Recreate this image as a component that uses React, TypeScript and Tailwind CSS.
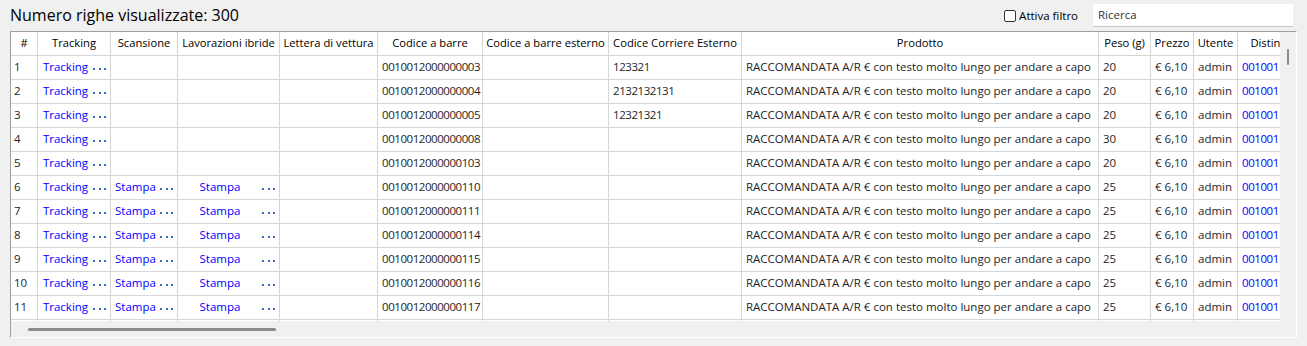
import React from 'react';

type Row = {
  n: number;
  stampa: boolean;
  codice: string;
  corriere: string;
  peso: string;
};

const rows: Row[] = [
  { n: 1, stampa: false, codice: '0010012000000003', corriere: '123321', peso: '20' },
  { n: 2, stampa: false, codice: '0010012000000004', corriere: '2132132131', peso: '20' },
  { n: 3, stampa: false, codice: '0010012000000005', corriere: '12321321', peso: '20' },
  { n: 4, stampa: false, codice: '0010012000000008', corriere: '', peso: '30' },
  { n: 5, stampa: false, codice: '0010012000000103', corriere: '', peso: '20' },
  { n: 6, stampa: true, codice: '0010012000000110', corriere: '', peso: '25' },
  { n: 7, stampa: true, codice: '0010012000000111', corriere: '', peso: '25' },
  { n: 8, stampa: true, codice: '0010012000000114', corriere: '', peso: '25' },
  { n: 9, stampa: true, codice: '0010012000000115', corriere: '', peso: '25' },
  { n: 10, stampa: true, codice: '0010012000000116', corriere: '', peso: '25' },
  { n: 11, stampa: true, codice: '0010012000000117', corriere: '', peso: '25' },
  { n: 12, stampa: true, codice: '0010012000000118', corriere: '', peso: '25' },
];

const headers = [
  '#',
  'Tracking',
  'Scansione',
  'Lavorazioni ibride',
  'Lettera di vettura',
  'Codice a barre',
  'Codice a barre esterno',
  'Codice Corriere Esterno',
  'Prodotto',
  'Peso (g)',
  'Prezzo',
  'Utente',
  'Distinta',
];

const cols =
  'grid-cols-[27px_73px_67px_102px_98px_105px_126px_133px_357px_52px_43px_44px_66px]';

function Dots() {
  return (
    <span className="flex w-[13px] shrink-0 items-center justify-between pt-[3px]">
      <span className="h-[2px] w-[2px] bg-[#3b6cc0]" />
      <span className="h-[2px] w-[2px] bg-[#3b6cc0]" />
      <span className="h-[2px] w-[2px] bg-[#3b6cc0]" />
    </span>
  );
}

function ButtonCell({ label }: { label?: string }) {
  return (
    <div className="flex h-[24px] items-center border-b border-r border-[#d6d6d6] pb-[1px] pr-[4px]">
      {label && (
        <>
          <span className="flex-1 text-center text-[#0000ff]">{label}</span>
          <Dots />
        </>
      )}
    </div>
  );
}

// digits in Segoe UI are narrower than in Open Sans, hence the tighter tracking
function Cell({ children, blue, num }: { children?: React.ReactNode; blue?: boolean; num?: boolean }) {
  return (
    <div
      className={`flex h-[24px] items-center overflow-hidden whitespace-nowrap border-b border-r border-[#d6d6d6] pb-[1px] pl-[4px] ${
        blue ? 'text-[#0000ff]' : ''
      } ${num ? 'tracking-[-0.45px]' : ''}`}
    >
      {children}
    </div>
  );
}

export default function App() {
  return (
    <div
      className="flex h-[346px] w-[1307px] flex-col bg-[#f0f0f0] text-[#1e1e1e]"
      style={{ fontFamily: '"Open Sans", "Noto Sans", sans-serif' }}
    >
      <div className="flex h-[31px] items-center">
        <div className="pb-[2px] pl-[10px] text-[16px] text-black">Numero righe visualizzate: 300</div>
        <div className="ml-auto flex items-center pr-[14px]">
          <span className="h-[12px] w-[12px] rounded-[2px] border border-[#333] bg-white" />
          <span className="ml-[3px] text-[11.5px] text-black">Attiva filtro</span>
          <div className="ml-[15px] mb-[1px] flex h-[23px] w-[200px] items-center border-b border-[#c4c4c4] bg-white pl-[5px] text-[11.5px] text-[#333]">
            Ricerca
          </div>
        </div>
      </div>

      <div className="mx-[10px] grid h-[307px] grid-cols-[1fr_16px] grid-rows-[1fr_16px] border border-b-white border-l-[#a0a0a0] border-r-white border-t-[#a0a0a0]">
        <div className="overflow-hidden bg-white text-[11.5px]">
          <div className={`grid w-max ${cols}`}>
            {headers.map((h) => (
              <div
                key={h}
                className="flex h-[24px] items-center justify-center overflow-hidden whitespace-nowrap border-b border-r border-[#d6d6d6] pb-[1px] text-[11.2px] text-black"
              >
                {h}
              </div>
            ))}
            {rows.map((r) => (
              <React.Fragment key={r.n}>
                <div className="flex h-[24px] items-center border-b border-r border-[#d6d6d6] pb-[1px] pl-[3px]">{r.n}</div>
                <ButtonCell label="Tracking" />
                <ButtonCell label={r.stampa ? 'Stampa' : undefined} />
                <ButtonCell label={r.stampa ? 'Stampa' : undefined} />
                <Cell />
                <Cell num>{r.codice}</Cell>
                <Cell />
                <Cell num>{r.corriere}</Cell>
                <Cell>RACCOMANDATA A/R € con testo molto lungo per andare a capo</Cell>
                <Cell>{r.peso}</Cell>
                <Cell>€ 6,10</Cell>
                <Cell>admin</Cell>
                <Cell blue num>0010011000000001</Cell>
              </React.Fragment>
            ))}
          </div>
        </div>
        <div className="pl-[7px] pt-[17px]">
          <div className="h-[16px] w-[2px] rounded-full bg-[#8a8a8a]" />
        </div>
        <div className="pl-[17px] pt-[7px]">
          <div className="h-[3px] w-[248px] rounded-full bg-[#8a8a8a]" />
        </div>
        <div />
      </div>
    </div>
  );
}
